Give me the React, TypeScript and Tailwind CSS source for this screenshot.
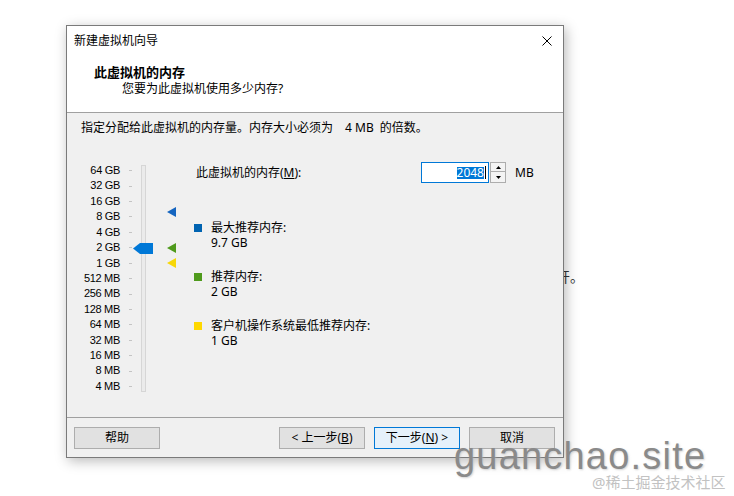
import React from 'react'

const ui = "font-['Noto_Sans','Noto_Sans_CJK_SC',sans-serif]"

const scale = ['64 GB', '32 GB', '16 GB', '8 GB', '4 GB', '2 GB', '1 GB', '512 MB', '256 MB', '128 MB', '64 MB', '32 MB', '16 MB', '8 MB', '4 MB']

const markers = [
  { fill: '#1565c0', pos: 'top-[45px]' },
  { fill: '#4f9a1c', pos: 'top-[81px]' },
  { fill: '#f7d708', pos: 'top-[96px]' },
]

const legend = [
  { color: 'bg-[#0063b1]', label: '最大推荐内存:', value: '9.7 GB' },
  { color: 'bg-[#4f9a1c]', label: '推荐内存:', value: '2 GB' },
  { color: 'bg-[#ffd800]', label: '客户机操作系统最低推荐内存:', value: '1 GB' },
]

function Btn({ children, primary }: { children: React.ReactNode; primary?: boolean }) {
  return (
    <button
      className={`flex h-[22px] w-[86px] items-center justify-center border text-[12px] leading-[16px] text-black ${
        primary ? 'border-[#0078d7] bg-[#e5f1fb]' : 'border-[#adadad] bg-[#e1e1e1]'
      }`}
    >
      {children}
    </button>
  )
}

export default function App() {
  return (
    <div className={`relative h-[496px] w-[734px] overflow-hidden bg-white text-black ${ui}`}>
      {/* page text behind the wizard */}
      <span className="absolute left-[556px] top-[269px] text-[14px] leading-[16px] text-[#333]">开。</span>

      <div className="absolute left-[66px] top-[25px] z-10 flex h-[433px] w-[498px] flex-col border border-[#7a7a7a] bg-[#f0f0f0] shadow-[2px_3px_12px_rgba(0,0,0,0.28)]">
        {/* title bar */}
        <div className="flex h-[30px] items-center justify-between bg-white pl-[7px] pr-[11px] text-[12px] leading-[16px]">
          <span>新建虚拟机向导</span>
          <svg width="10" height="10" viewBox="0 0 10 10" className="block">
            <path d="M0.5 0.5 L9.5 9.5 M9.5 0.5 L0.5 9.5" stroke="#000" strokeWidth="1" fill="none" />
          </svg>
        </div>

        {/* header */}
        <div className="h-[57px] border-b border-[#a0a0a0] bg-white pl-[27px] pt-[8px]">
          <div className="text-[13px] font-bold leading-[16px]">此虚拟机的内存</div>
          <div className="mt-[1px] pl-[28px] text-[12px] leading-[16px]">您要为此虚拟机使用多少内存?</div>
        </div>

        {/* body */}
        <div className="flex-1 pl-[14px] pt-[7px] text-[12px] leading-[16px]">
          <div className="flex">
            <span>指定分配给此虚拟机的内存量。内存大小必须为</span>
            <span className="ml-[12px]">4 MB</span>
            <span className="ml-[6px]">的倍数。</span>
          </div>

          <div className="mt-[26px] flex">
            {/* memory trackbar */}
            <div className="relative -ml-[14px] flex w-[127px] pt-[1px]">
              <div className="w-[53px] font-['Liberation_Sans',sans-serif] text-[11px] tracking-[-0.3px]">
                {scale.map(s => (
                  <div key={s} className="h-[15.43px] text-right leading-[15.43px]">{s}</div>
                ))}
              </div>
              <div className="ml-[9px] w-[3px]">
                {scale.map(s => (
                  <div key={s} className="flex h-[15.43px] items-center">
                    <div className="h-px w-[3px] bg-[#c4c4c4]" />
                  </div>
                ))}
              </div>
              <div className="ml-[9px] mt-[2px] h-[227px] w-[5px] border border-[#d6d6d6] bg-[#ebebeb]" />

              <svg width="20" height="11" viewBox="0 0 20 11" className="absolute left-[66px] top-[81px]">
                <polygon points="0,5.5 7,0 20,0 20,11 7,11" fill="#0078d7" />
              </svg>
              {markers.map(m => (
                <svg key={m.fill} width="9" height="10" viewBox="0 0 9 10" className={`absolute left-[100px] ${m.pos}`}>
                  <polygon points="0,5 9,0 9,10" fill={m.fill} />
                </svg>
              ))}
            </div>

            {/* value and recommendations */}
            <div className="flex flex-col">
              <div className="flex h-[21px] items-center">
                <span className="ml-[2px] w-[225px]">
                  此虚拟机的内存(<span className="underline">M</span>):
                </span>
                <div className="flex h-[21px] w-[68px] items-center justify-end border border-[#0078d7] bg-white pr-[2px]">
                  <span className="bg-[#0078d7] leading-[12px] text-white">2048</span>
                  <span className="ml-px h-[13px] w-px bg-black" />
                </div>
                <div className="ml-px flex h-[21px] w-[16px] flex-col border border-[#adadad] bg-[#f4f4f4]">
                  <div className="flex h-[9px] items-center justify-center border-b border-[#adadad]">
                    <svg width="5" height="3" viewBox="0 0 5 3"><polygon points="2.5,0 5,3 0,3" fill="#000" /></svg>
                  </div>
                  <div className="flex flex-1 items-center justify-center">
                    <svg width="5" height="3" viewBox="0 0 5 3"><polygon points="0,0 5,0 2.5,3" fill="#000" /></svg>
                  </div>
                </div>
                <span className="ml-[9px]">MB</span>
              </div>

              <div className="mt-[37px] flex flex-col gap-[19px]">
                {legend.map(l => (
                  <div key={l.label} className="flex items-start leading-[15px]">
                    <div className={`mt-[4px] h-[8px] w-[8px] ${l.color}`} />
                    <div className="ml-[9px]">
                      <div>{l.label}</div>
                      <div>{l.value}</div>
                    </div>
                  </div>
                ))}
              </div>
            </div>
          </div>
        </div>

        {/* footer buttons */}
        <div className="flex h-[40px] items-start justify-between border-t border-[#a0a0a0] pl-[7px] pr-[8px] pt-[9px]">
          <Btn>帮助</Btn>
          <div className="flex gap-[9px]">
            <Btn>&lt; 上一步(<span className="underline">B</span>)</Btn>
            <Btn primary>下一步(<span className="underline">N</span>) &gt;</Btn>
            <Btn>取消</Btn>
          </div>
        </div>
      </div>

      {/* watermark */}
      <span className="absolute left-[454px] top-[437px] z-20 font-['Liberation_Sans',sans-serif] text-[38px] leading-[38px] tracking-[1.2px] text-[#8a8a8a] [text-shadow:1px_1px_2px_rgba(180,180,180,0.6)]">
        guanchao.site
      </span>
      <span className="absolute left-[592px] top-[474px] z-20 text-[15px] leading-[16px] text-[#c2c2c2]">@稀土掘金技术社区</span>
    </div>
  )
}
